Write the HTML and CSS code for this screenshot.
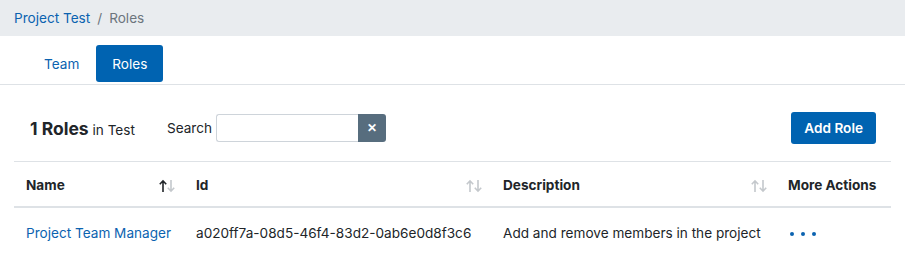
FILE: index.html
```html
<!DOCTYPE html>
<html lang="en">
<head>
  <meta charset="UTF-8">
  <title>Roles</title>
  <link rel="stylesheet" href="styles.css">
</head>
<body>
  <!-- Breadcrumb -->
  <div class="breadcrumb">
    <a href="#">Project Test</a>
    <span class="sep">/</span>
    <span class="current">Roles</span>
  </div>

  <!-- Tabs -->
  <div class="tabs">
    <a href="#" class="tab">Team</a>
    <a href="#" class="tab active">Roles</a>
  </div>

  <div class="content">
    <div class="toolbar">
      <div class="title"><strong>1 Roles</strong> in Test</div>
      <label class="search">
        <span>Search</span>
        <input type="text">
        <button class="clear" type="button">&#x2715;</button>
      </label>
      <button class="add-btn" type="button">Add Role</button>
    </div>

    <table class="roles">
      <thead>
        <tr>
          <th class="col-name">Name
            <svg class="sort" width="16" height="14" viewBox="0 0 16 14"><path d="M4 13V2M0.8 5.2L4 1.8L7.2 5.2" stroke="#212529" stroke-width="1.6" fill="none"/><path d="M12 1v11M8.8 8.8L12 12.2L15.2 8.8" stroke="#c4c8cc" stroke-width="1.6" fill="none"/></svg>
          </th>
          <th class="col-id">Id
            <svg class="sort" width="16" height="14" viewBox="0 0 16 14"><path d="M4 13V2M0.8 5.2L4 1.8L7.2 5.2" stroke="#c4c8cc" stroke-width="1.6" fill="none"/><path d="M12 1v11M8.8 8.8L12 12.2L15.2 8.8" stroke="#c4c8cc" stroke-width="1.6" fill="none"/></svg>
          </th>
          <th class="col-desc">Description
            <svg class="sort" width="16" height="14" viewBox="0 0 16 14"><path d="M4 13V2M0.8 5.2L4 1.8L7.2 5.2" stroke="#c4c8cc" stroke-width="1.6" fill="none"/><path d="M12 1v11M8.8 8.8L12 12.2L15.2 8.8" stroke="#c4c8cc" stroke-width="1.6" fill="none"/></svg>
          </th>
          <th class="col-actions">More Actions</th>
        </tr>
      </thead>
      <tbody>
        <tr>
          <td><a href="#">Project Team Manager</a></td>
          <td>a020ff7a-08d5-46f4-83d2-0ab6e0d8f3c6</td>
          <td>Add and remove members in the project</td>
          <td><span class="dots"><i></i><i></i><i></i></span></td>
        </tr>
      </tbody>
    </table>
  </div>
</body>
</html>
```

FILE: styles.css
```css
body {
  margin: 0;
  font-family: Inter, "Liberation Sans", sans-serif;
  font-size: 13.6px;
  color: #212529;
  background: #fff;
}
a {
  color: #0b63b0;
  text-decoration: none;
}
.breadcrumb {
  height: 36px;
  background: #e9ecef;
  padding: 0 14px;
  display: flex;
  align-items: center;
  gap: 7px;
}
.breadcrumb .sep,
.breadcrumb .current {
  color: #6c757d;
}
.tabs {
  height: 49px;
  box-sizing: border-box;
  border-bottom: 1px solid #dee2e6;
  padding: 9px 0 0 30px;
  display: flex;
  align-items: flex-start;
  gap: 3px;
}
.tab {
  height: 37px;
  display: flex;
  align-items: center;
  padding: 0 14px;
  border-radius: 3px;
}
.tab.active {
  background: #0063b1;
  color: #fff;
  padding: 0 16px;
}
.content {
  margin: 0 14px;
}
.toolbar {
  height: 76px;
  box-sizing: border-box;
  display: flex;
  align-items: center;
  padding: 10px 15px 0 16px;
}
.title strong {
  font-size: 17.5px;
  font-weight: 700;
}
.search {
  margin-left: 32px;
  display: flex;
  align-items: center;
}
.search span {
  margin-right: 4px;
}
.search input {
  width: 142px;
  height: 28px;
  box-sizing: border-box;
  border: 1px solid #ced4da;
  border-right: none;
  border-radius: 3px 0 0 3px;
  margin: 0;
  padding: 0 6px;
}
.clear {
  width: 28px;
  height: 28px;
  border: none;
  background: #576d7e;
  color: #fff;
  font-size: 12px;
  font-weight: bold;
  border-radius: 0 3px 3px 0;
  padding: 0;
}
.add-btn {
  margin-left: auto;
  height: 32px;
  padding: 0 13px;
  background: #0063b1;
  color: #fff;
  border: none;
  border-radius: 3px;
  font-family: inherit;
  font-size: 13.6px;
  font-weight: 600;
}
.roles {
  width: 100%;
  border-collapse: collapse;
  table-layout: fixed;
}
.roles th {
  height: 45px;
  box-sizing: border-box;
  border-top: 1px solid #dee2e6;
  border-bottom: 2px solid #dee2e6;
  text-align: left;
  font-weight: 700;
  padding: 2px 9px 0 12px;
  position: relative;
  white-space: nowrap;
}
.roles td {
  height: 46px;
  padding: 2px 0 0 12px;
  white-space: nowrap;
}
.sort {
  position: absolute;
  right: 9px;
  top: 17px;
}
.col-name { width: 170px; }
.col-id { width: 307px; }
.col-desc { width: 285px; }
.dots {
  display: inline-flex;
  vertical-align: middle;
  gap: 7px;
  padding-left: 2px;
}
.dots i {
  width: 4px;
  height: 4px;
  border-radius: 50%;
  background: #0b63b0;
}
```
